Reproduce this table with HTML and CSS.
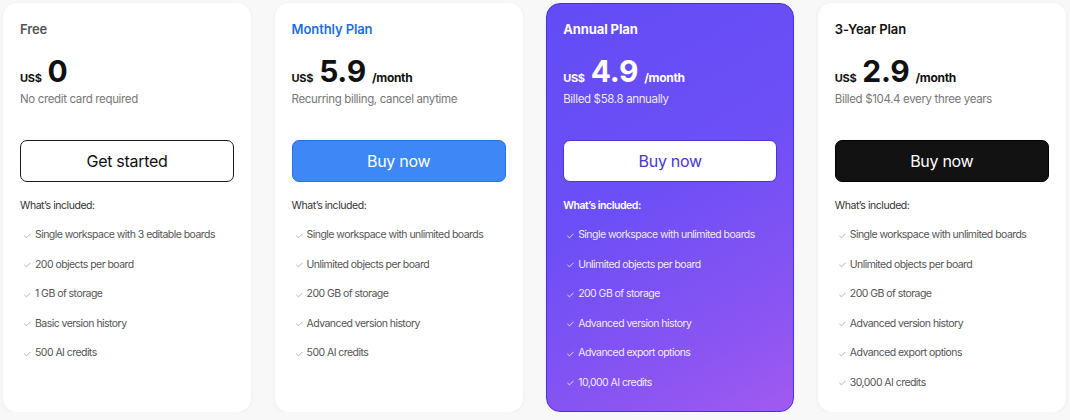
FILE: index.html
```html
<!DOCTYPE html>
<html lang="en">
<head>
<meta charset="utf-8">
<title>Pricing</title>
<link rel="stylesheet" href="styles.css">
</head>
<body>
<div class="plans">
  <section class="card">
    <h3 class="plan-name">Free</h3>
    <div class="price"><span class="cur">US$</span><span class="amount">0</span></div>
    <p class="note">No credit card required</p>
    <button class="btn btn-outline">Get started</button>
    <p class="incl">What’s included:</p>
    <ul class="features">
      <li><svg class="chk" viewBox="0 0 10 8"><path d="M1 4.2l2.6 2.4L9 1.2"/></svg>Single workspace with 3 editable boards</li>
      <li><svg class="chk" viewBox="0 0 10 8"><path d="M1 4.2l2.6 2.4L9 1.2"/></svg>200 objects per board</li>
      <li><svg class="chk" viewBox="0 0 10 8"><path d="M1 4.2l2.6 2.4L9 1.2"/></svg>1 GB of storage</li>
      <li><svg class="chk" viewBox="0 0 10 8"><path d="M1 4.2l2.6 2.4L9 1.2"/></svg>Basic version history</li>
      <li><svg class="chk" viewBox="0 0 10 8"><path d="M1 4.2l2.6 2.4L9 1.2"/></svg>500 AI credits</li>
    </ul>
  </section>

  <section class="card">
    <h3 class="plan-name blue">Monthly Plan</h3>
    <div class="price"><span class="cur">US$</span><span class="amount">5.9</span><span class="per">/month</span></div>
    <p class="note">Recurring billing, cancel anytime</p>
    <button class="btn btn-blue">Buy now</button>
    <p class="incl">What’s included:</p>
    <ul class="features">
      <li><svg class="chk" viewBox="0 0 10 8"><path d="M1 4.2l2.6 2.4L9 1.2"/></svg>Single workspace with unlimited boards</li>
      <li><svg class="chk" viewBox="0 0 10 8"><path d="M1 4.2l2.6 2.4L9 1.2"/></svg>Unlimited objects per board</li>
      <li><svg class="chk" viewBox="0 0 10 8"><path d="M1 4.2l2.6 2.4L9 1.2"/></svg>200 GB of storage</li>
      <li><svg class="chk" viewBox="0 0 10 8"><path d="M1 4.2l2.6 2.4L9 1.2"/></svg>Advanced version history</li>
      <li><svg class="chk" viewBox="0 0 10 8"><path d="M1 4.2l2.6 2.4L9 1.2"/></svg>500 AI credits</li>
    </ul>
  </section>

  <section class="card card-featured">
    <h3 class="plan-name">Annual Plan</h3>
    <div class="price"><span class="cur">US$</span><span class="amount">4.9</span><span class="per">/month</span></div>
    <p class="note">Billed $58.8 annually</p>
    <button class="btn btn-white">Buy now</button>
    <p class="incl">What’s included:</p>
    <ul class="features">
      <li><svg class="chk" viewBox="0 0 10 8"><path d="M1 4.2l2.6 2.4L9 1.2"/></svg>Single workspace with unlimited boards</li>
      <li><svg class="chk" viewBox="0 0 10 8"><path d="M1 4.2l2.6 2.4L9 1.2"/></svg>Unlimited objects per board</li>
      <li><svg class="chk" viewBox="0 0 10 8"><path d="M1 4.2l2.6 2.4L9 1.2"/></svg>200 GB of storage</li>
      <li><svg class="chk" viewBox="0 0 10 8"><path d="M1 4.2l2.6 2.4L9 1.2"/></svg>Advanced version history</li>
      <li><svg class="chk" viewBox="0 0 10 8"><path d="M1 4.2l2.6 2.4L9 1.2"/></svg>Advanced export options</li>
      <li><svg class="chk" viewBox="0 0 10 8"><path d="M1 4.2l2.6 2.4L9 1.2"/></svg>10,000 AI credits</li>
    </ul>
  </section>

  <section class="card">
    <h3 class="plan-name dark">3-Year Plan</h3>
    <div class="price"><span class="cur">US$</span><span class="amount">2.9</span><span class="per">/month</span></div>
    <p class="note">Billed $104.4 every three years</p>
    <button class="btn btn-black">Buy now</button>
    <p class="incl">What’s included:</p>
    <ul class="features">
      <li><svg class="chk" viewBox="0 0 10 8"><path d="M1 4.2l2.6 2.4L9 1.2"/></svg>Single workspace with unlimited boards</li>
      <li><svg class="chk" viewBox="0 0 10 8"><path d="M1 4.2l2.6 2.4L9 1.2"/></svg>Unlimited objects per board</li>
      <li><svg class="chk" viewBox="0 0 10 8"><path d="M1 4.2l2.6 2.4L9 1.2"/></svg>200 GB of storage</li>
      <li><svg class="chk" viewBox="0 0 10 8"><path d="M1 4.2l2.6 2.4L9 1.2"/></svg>Advanced version history</li>
      <li><svg class="chk" viewBox="0 0 10 8"><path d="M1 4.2l2.6 2.4L9 1.2"/></svg>Advanced export options</li>
      <li><svg class="chk" viewBox="0 0 10 8"><path d="M1 4.2l2.6 2.4L9 1.2"/></svg>30,000 AI credits</li>
    </ul>
  </section>
</div>
</body>
</html>
```

FILE: styles.css
```css
* { box-sizing: border-box; }

html, body {
  margin: 0;
  background: #f8f8f9;
}

body {
  font-family: Inter, "Noto Sans", "Liberation Sans", sans-serif;
  color: #111;
  padding: 3px 4px 0 3px;
}

.plans {
  display: flex;
  gap: 23.6px;
}

.card {
  width: 248px;
  height: 409px;
  background: #fff;
  border-radius: 14px;
  padding: 16px 17px 0 17px;
  box-shadow: 0 1px 4px rgba(0, 0, 0, 0.05);
  display: flex;
  flex-direction: column;
}

.plan-name {
  margin: 0;
  font-size: 13px;
  line-height: 20px;
  font-weight: 600;
  color: #555;
  letter-spacing: -0.1px;
}
.plan-name.blue { color: #1d6fe0; }
.plan-name.dark { color: #111; }

.price {
  margin-top: 15px;
  height: 34px;
  display: flex;
  align-items: baseline;
  line-height: 34px;
}
.cur {
  font-size: 11px;
  font-weight: 700;
  margin-right: 6px;
  letter-spacing: -0.3px;
}
.amount {
  font-size: 30px;
  font-weight: 700;
  letter-spacing: -0.3px;
}
.per {
  font-size: 12px;
  font-weight: 700;
  margin-left: 6px;
  letter-spacing: -0.3px;
}

.note {
  margin: 2px 0 0;
  font-size: 11.5px;
  line-height: 18px;
  color: #777;
  letter-spacing: -0.35px;
}

.btn {
  margin-top: 32px;
  height: 42px;
  width: 214px;
  border-radius: 7px;
  font-family: inherit;
  font-size: 16px;
  font-weight: 400;
  letter-spacing: -0.3px;
  cursor: pointer;
}
.btn-outline {
  background: #fff;
  border: 1.5px solid #1a1a1a;
  color: #111;
}
.btn-blue {
  background: #3d88f6;
  border: 1px solid #2d6fdc;
  color: #fff;
}
.btn-white {
  background: #fff;
  border: 1px solid #4a34d6;
  color: #4a34cc;
}
.btn-black {
  background: #121212;
  border: 1px solid #000;
  color: #fff;
}

.incl {
  margin: 16px 0 0;
  font-size: 10.5px;
  line-height: 16px;
  color: #333;
  letter-spacing: -0.45px;
}

.features {
  list-style: none;
  margin: 13px 0 0;
  padding: 0;
  display: flex;
  flex-direction: column;
  gap: 13.6px;
}
.features li {
  display: flex;
  align-items: center;
  font-size: 10.5px;
  line-height: 16px;
  color: #555;
  letter-spacing: -0.55px;
  white-space: nowrap;
}
.chk {
  width: 7px;
  height: 6px;
  margin: 1px 4px 0 4px;
  fill: none;
  stroke: #aaa;
  stroke-width: 1.3;
  stroke-linecap: round;
  stroke-linejoin: round;
  flex: none;
}

.card-featured {
  background: linear-gradient(150deg, #624cf6 0%, #6d4ff6 45%, #8a55f2 80%, #a25af0 100%);
  border: 1px solid #4a30d8;
  padding: 15px 16px 0 16px;
  color: #fff;
}
.card-featured .plan-name,
.card-featured .price,
.card-featured .incl { color: #fff; }
.card-featured .plan-name { font-weight: 700; }
.card-featured .note,
.card-featured .features li { color: rgba(255, 255, 255, 0.9); }
.card-featured .incl { font-weight: 600; }
.card-featured .chk { stroke: rgba(255, 255, 255, 0.85); }
```
